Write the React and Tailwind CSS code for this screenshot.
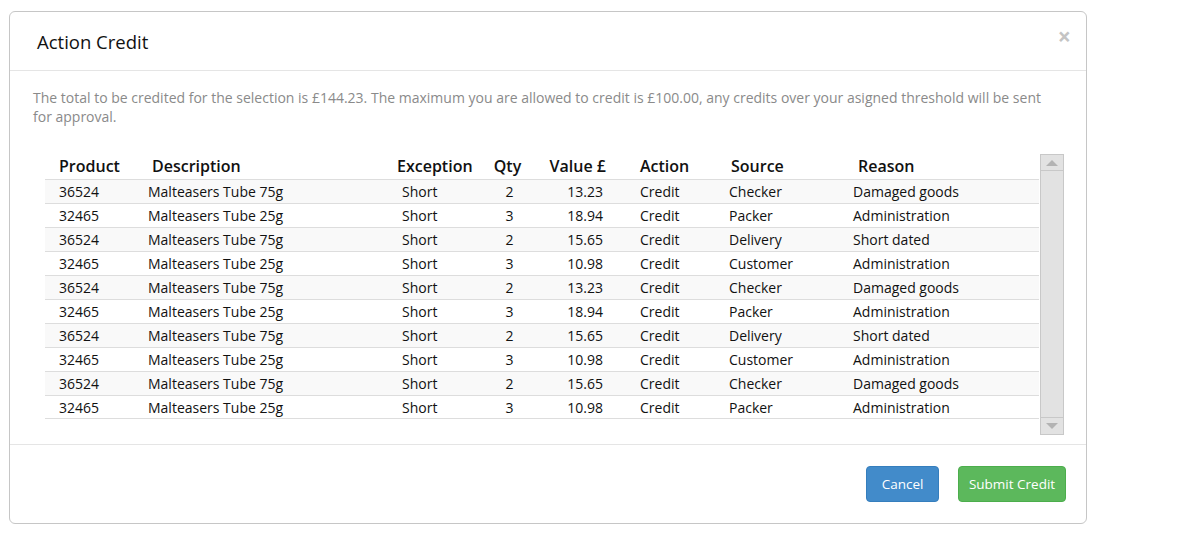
import React from "react";

const rows = [
  ["36524", "Malteasers Tube 75g", "Short", "2", "13.23", "Credit", "Checker", "Damaged goods"],
  ["32465", "Malteasers Tube 25g", "Short", "3", "18.94", "Credit", "Packer", "Administration"],
  ["36524", "Malteasers Tube 75g", "Short", "2", "15.65", "Credit", "Delivery", "Short dated"],
  ["32465", "Malteasers Tube 25g", "Short", "3", "10.98", "Credit", "Customer", "Administration"],
  ["36524", "Malteasers Tube 75g", "Short", "2", "13.23", "Credit", "Checker", "Damaged goods"],
  ["32465", "Malteasers Tube 25g", "Short", "3", "18.94", "Credit", "Packer", "Administration"],
  ["36524", "Malteasers Tube 75g", "Short", "2", "15.65", "Credit", "Delivery", "Short dated"],
  ["32465", "Malteasers Tube 25g", "Short", "3", "10.98", "Credit", "Customer", "Administration"],
  ["36524", "Malteasers Tube 75g", "Short", "2", "15.65", "Credit", "Checker", "Damaged goods"],
  ["32465", "Malteasers Tube 25g", "Short", "3", "10.98", "Credit", "Packer", "Administration"],
];

const App = () => {
  return (
    <div className="w-[1196px] h-[540px] bg-white pt-[11px] pl-[9px] font-['Open_Sans',sans-serif]">
      <div className="w-[1078px] h-[513px] border border-[#c6c6c6] rounded-[6px] bg-white flex flex-col">
        {/* Header */}
        <div className="h-[59px] border-b border-[#e5e5e5] flex items-center justify-between pl-[27px] pr-[14px]">
          <h4 className="text-[18.5px] text-[#111] pt-[2px]">Action Credit</h4>
          <span className="text-[#c4c4c4] text-[23px] font-bold leading-none -mt-[10px] mr-[1px]">×</span>
        </div>

        {/* Body */}
        <div className="h-[374px] border-b border-[#e5e5e5] pl-[23px] pr-[22px] pt-[17px]">
          <p className="max-w-[1018px] text-[14px] leading-[19px] text-[#8a8a8a]">
            The total to be credited for the selection is £144.23. The maximum you are allowed to credit is £100.00, any credits over your asigned threshold will be sent for approval.
          </p>

          <div className="flex mt-[26px] ml-[12px]">
            <div className="w-[994px] text-[#111]">
              <div className="flex h-[27px] items-center text-[16px] font-semibold text-[#111]">
                <div className="w-[89px] pl-[14px]">Product</div>
                <div className="w-[254px] pl-[18px]">Description</div>
                <div className="w-[97px] pl-[9px]">Exception</div>
                <div className="w-[45px] text-center">Qty</div>
                <div className="w-[85px] text-right pr-[9px]">Value £</div>
                <div className="w-[100px] pl-[25px]">Action</div>
                <div className="w-[125px] pl-[16px]">Source</div>
                <div className="flex-1 pl-[18px]">Reason</div>
              </div>
              {rows.map((r, i) => (
                <div
                  key={i}
                  className={`flex h-[24px] items-center border-t border-[#dddddd] text-[14px] ${
                    i % 2 === 0 ? "bg-[#f9f9f9]" : "bg-white"
                  } ${i === rows.length - 1 ? "border-b" : ""}`}
                >
                  <div className="w-[89px] pl-[14px]">{r[0]}</div>
                  <div className="w-[254px] pl-[14px]">{r[1]}</div>
                  <div className="w-[97px] pl-[14px]">{r[2]}</div>
                  <div className="w-[45px] text-center pl-[4px]">{r[3]}</div>
                  <div className="w-[85px] text-right pr-[12px]">{r[4]}</div>
                  <div className="w-[100px] pl-[25px]">{r[5]}</div>
                  <div className="w-[125px] pl-[14px]">{r[6]}</div>
                  <div className="flex-1 pl-[13px]">{r[7]}</div>
                </div>
              ))}
            </div>

            {/* Scrollbar */}
            <div className="w-[24px] h-[281px] mt-[2px] ml-[1px] border border-[#c8c8c8] bg-[#e2e2e2] flex flex-col justify-between">
              <div className="h-[16px] border-b border-[#c8c8c8] flex items-center justify-center">
                <svg width="12" height="6" viewBox="0 0 12 6">
                  <path d="M0 6 L6 0 L12 6 Z" fill="#b3b3b3" />
                </svg>
              </div>
              <div className="h-[17px] border-t border-[#c8c8c8] flex items-center justify-center">
                <svg width="12" height="6" viewBox="0 0 12 6">
                  <path d="M0 0 L12 0 L6 6 Z" fill="#b3b3b3" />
                </svg>
              </div>
            </div>
          </div>
        </div>

        {/* Footer */}
        <div className="flex-1 flex justify-end items-start pt-[21px] pr-[20px] gap-[19px]">
          <button className="w-[73px] h-[36px] rounded-[4px] bg-[#428bca] border border-[#357ebd] text-white text-[13.5px]">
            Cancel
          </button>
          <button className="w-[108px] h-[36px] rounded-[4px] bg-[#5cb85c] border border-[#4cae4c] text-white text-[13.5px]">
            Submit Credit
          </button>
        </div>
      </div>
    </div>
  );
};

export default App;
